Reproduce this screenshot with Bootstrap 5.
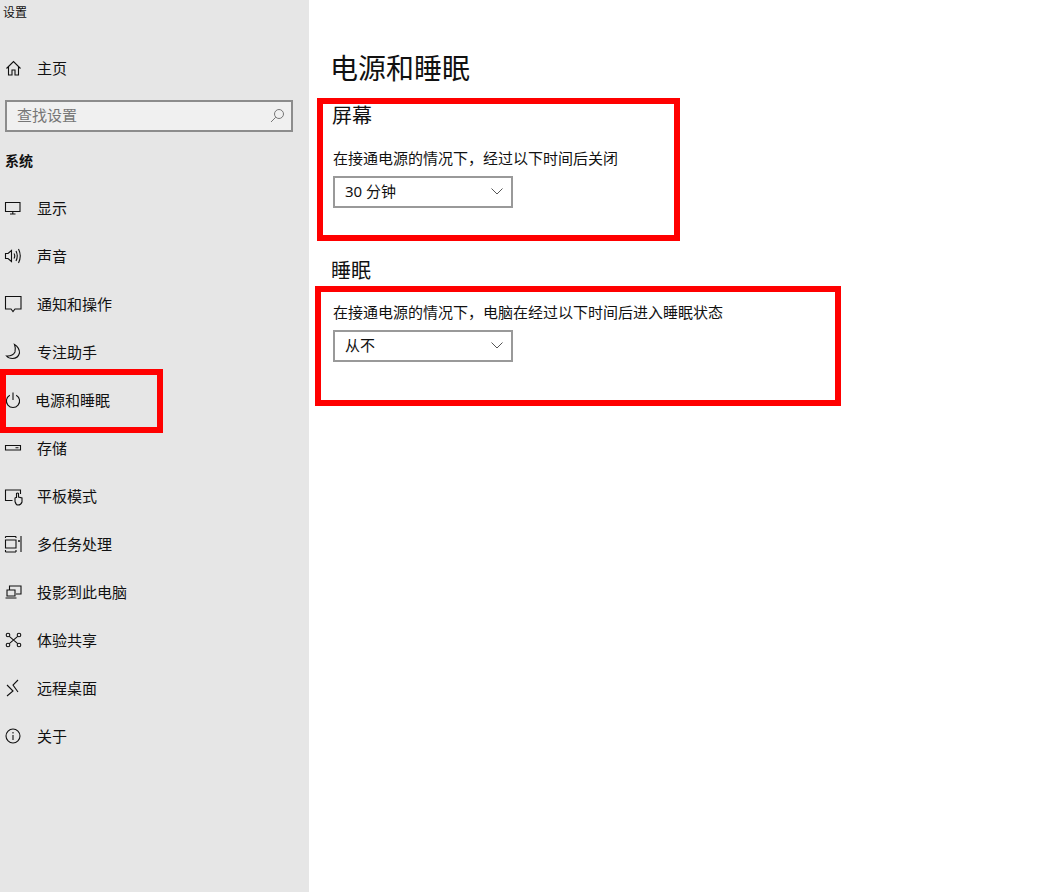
<!DOCTYPE html>
<html lang="zh-CN">
<head>
    <meta charset="UTF-8">
    <meta name="viewport" content="width=device-width, initial-scale=1.0">
    <title>设置</title>
    <link href="https://cdn.jsdelivr.net/npm/bootstrap@5.3.0/dist/css/bootstrap.min.css" rel="stylesheet">
    <style>
        html, body { height: 100%; }
        body {
            position: relative;
            overflow: hidden;
            background: #fff;
            color: #111;
            font-family: "Noto Sans", "Noto Sans CJK SC", sans-serif;
            font-size: 15px;
        }
        .shell { height: 892px; }
        .side-pane { width: 309px; flex: none; background: #e6e6e6; }
        .app-name { height: 44px; padding: 4px 0 0 3px; font-size: 12px; line-height: 17px; }
        .side-link { height: 48px; color: #111; line-height: 20px; padding: 0 0 1px 5px; }
        .side-link:hover { color: #111; }
        .side-link svg { width: 17px; height: 18px; margin-right: 15px; flex: none; overflow: visible; }
        .side-link svg * { vector-effect: non-scaling-stroke; }
        .power-text { margin-left: -2px; }
        .find-box { height: 32px; margin: 8px 16px 0 5px; border: 2px solid #8c8c8c; background: #f0f0f0; padding: 0 6px 2px 10px; }
        .find-box input { background: none; border: 0; outline: 0; padding: 0; min-width: 0; flex: 1; font-size: 15px; }
        .find-box input::placeholder { color: #767676; opacity: 1; }
        .group-name { height: 52px; padding: 19px 0 0 5px; font-size: 14px; line-height: 20px; font-weight: 700; }
        .main-pane { padding-left: 22px; }
        .page-title { font-size: 28px; line-height: 40px; font-weight: 400; margin: 48px 0 0 -1px; }
        .sect-title { font-size: 20px; line-height: 28px; font-weight: 400; margin: 14px 0 0 1px; }
        .sect-title.next-sect { margin-top: 49px; margin-left: 0; }
        .sect-note { font-size: 15px; line-height: 20px; margin: 18px 0 0 2px; }
        .sect-note.tight { margin-top: 17px; }
        .pick-box { width: 180px; height: 32px; margin-left: 2px; border: 2px solid #999; padding: 0 8px 2px 10px; background: #fff; }
        .mark-box { position: absolute; border: 6px solid #f00; pointer-events: none; }
        .mark-a { left: 317px; top: 98px; width: 363px; height: 143px; }
        .mark-b { left: 315px; top: 286px; width: 526px; height: 120px; }
        .mark-c { left: 0; top: 369px; width: 163px; height: 64px; }
    </style>
</head>
<body>
    <div class="d-flex shell">
        <aside class="side-pane">
            <div class="app-name">设置</div>
            <nav class="nav flex-column">
                <a class="nav-link side-link d-flex align-items-center" href="#">
                    <svg viewBox="0 0 17 18" fill="none" stroke="#111" stroke-width="1.1"><path d="M1.5 9.5 8.5 2.5 15.5 9.5M3.5 8V16H7V11H10V16H13.5V8"/></svg>主页
                </a>
            </nav>
            <div class="find-box d-flex align-items-center">
                <input type="text" placeholder="查找设置">
                <svg width="15" height="15" viewBox="0 0 15 15" fill="none" stroke="#777" stroke-width="1"><circle cx="9" cy="6" r="4.5"/><path d="M5.8 9.2 1 14"/></svg>
            </div>
            <div class="group-name">系统</div>
            <nav class="nav flex-column">
                <a class="nav-link side-link d-flex align-items-center" href="#">
                    <svg viewBox="0 0 17 18" fill="none" stroke="#111" stroke-width="1.1"><path d="M.5 3.5H15V12.5H.5ZM7.8 12.5V15M5 15H10.5"/></svg>显示
                </a>
                <a class="nav-link side-link d-flex align-items-center" href="#">
                    <svg viewBox="0 0 17 18" fill="none" stroke="#111" stroke-width="1.1"><path d="M.5 6.5H3L6.5 3.5V14.5L3 11.5H.5ZM9 6.5Q10.5 9 9 11.5M11 4Q13.5 9 11 14M13.5 2Q17 9 13.5 16"/></svg>声音
                </a>
                <a class="nav-link side-link d-flex align-items-center" href="#">
                    <svg viewBox="0 0 17 18" fill="none" stroke="#111" stroke-width="1.1"><path d="M.5 1.5H16V14H10L8 16.5 6 14H.5Z"/></svg>通知和操作
                </a>
                <a class="nav-link side-link d-flex align-items-center" href="#">
                    <svg viewBox="0 0 17 18" fill="none" stroke="#111" stroke-width="1.1"><path d="M9.5 1.5Q14.5 4.5 14.5 10 13 15.5 7.5 15.5 3.5 15.5 1.5 13 7.5 13.5 10 9 11 5.5 9.5 1.5Z"/></svg>专注助手
                </a>
                <a class="nav-link side-link d-flex align-items-center" href="#">
                    <svg viewBox="0 0 17 18" fill="none" stroke="#111" stroke-width="1.1"><path d="M8 1.5V9M4.8 4.2A6.6 6.6 0 1 0 11.2 4.2"/></svg><span class="power-text">电源和睡眠</span>
                </a>
                <a class="nav-link side-link d-flex align-items-center" href="#">
                    <svg viewBox="0 0 17 18" fill="none" stroke="#111" stroke-width="1.1"><path d="M.5 6.5H15.5V11H.5ZM10.5 8.7H13.5"/></svg>存储
                </a>
                <a class="nav-link side-link d-flex align-items-center" href="#">
                    <svg viewBox="0 0 17 18" fill="none" stroke="#111" stroke-width="1.1"><path d="M7.5 13.5H.5V3H15.5V7M10 14.5V11L11 10.5H11.5V6.5Q12.5 5.5 13.5 6.5V10L17 11V15Q16 18 13 18 11 18 10 14.5Z"/></svg>平板模式
                </a>
                <a class="nav-link side-link d-flex align-items-center" href="#">
                    <svg viewBox="0 0 17 18" fill="none" stroke="#111" stroke-width="1.1"><path d="M.5 1.5H11M.5 17H11M.5 1.5V3M11 1.5V3M.5 15V17M11 15V17M.5 5H11V13H.5ZM16 1V17"/><circle cx="14" cy="6" r="1" fill="#111" stroke="none"/></svg>多任务处理
                </a>
                <a class="nav-link side-link d-flex align-items-center" href="#">
                    <svg viewBox="0 0 17 18" fill="none" stroke="#111" stroke-width="1.1"><path d="M4.5 7V3H16V11H11M2 7H10V13H2ZM.5 15H11.5"/></svg>投影到此电脑
                </a>
                <a class="nav-link side-link d-flex align-items-center" href="#">
                    <svg viewBox="0 0 17 18" fill="none" stroke="#111" stroke-width="1.1"><circle cx="3" cy="4" r="1.8"/><circle cx="14" cy="4" r="1.8"/><circle cx="3" cy="14" r="1.8"/><circle cx="14" cy="14" r="1.8"/><path d="M4.3 5.3 12.7 12.7M12.7 5.3 4.3 12.7"/></svg>体验共享
                </a>
                <a class="nav-link side-link d-flex align-items-center" href="#">
                    <svg viewBox="0 0 17 18" fill="none" stroke="#111" stroke-width="1.1"><path d="M2 6 8 12 2 17M13 1 8 6 13 13"/></svg>远程桌面
                </a>
                <a class="nav-link side-link d-flex align-items-center" href="#">
                    <svg viewBox="0 0 17 18" fill="none" stroke="#111" stroke-width="1.1"><circle cx="8" cy="9" r="7"/><path d="M8 8V13M8 5V6.4"/></svg>关于
                </a>
            </nav>
        </aside>
        <main class="main-pane flex-grow-1">
            <h1 class="page-title">电源和睡眠</h1>
            <h2 class="sect-title">屏幕</h2>
            <p class="sect-note">在接通电源的情况下，经过以下时间后关闭</p>
            <div class="pick-box d-flex align-items-center justify-content-between mt-2">
                <span>30 分钟</span>
                <svg width="12" height="7" viewBox="0 0 12 7" fill="none" stroke="#555"><path d="M.5 .5 6 6 11.5 .5"/></svg>
            </div>
            <h2 class="sect-title next-sect">睡眠</h2>
            <p class="sect-note tight">在接通电源的情况下，电脑在经过以下时间后进入睡眠状态</p>
            <div class="pick-box d-flex align-items-center justify-content-between mt-2">
                <span>从不</span>
                <svg width="12" height="7" viewBox="0 0 12 7" fill="none" stroke="#555"><path d="M.5 .5 6 6 11.5 .5"/></svg>
            </div>
        </main>
    </div>
    <div class="mark-box mark-a"></div>
    <div class="mark-box mark-b"></div>
    <div class="mark-box mark-c"></div>
    <script src="https://cdn.jsdelivr.net/npm/bootstrap@5.3.0/dist/js/bootstrap.bundle.min.js"></script>
</body>
</html>
